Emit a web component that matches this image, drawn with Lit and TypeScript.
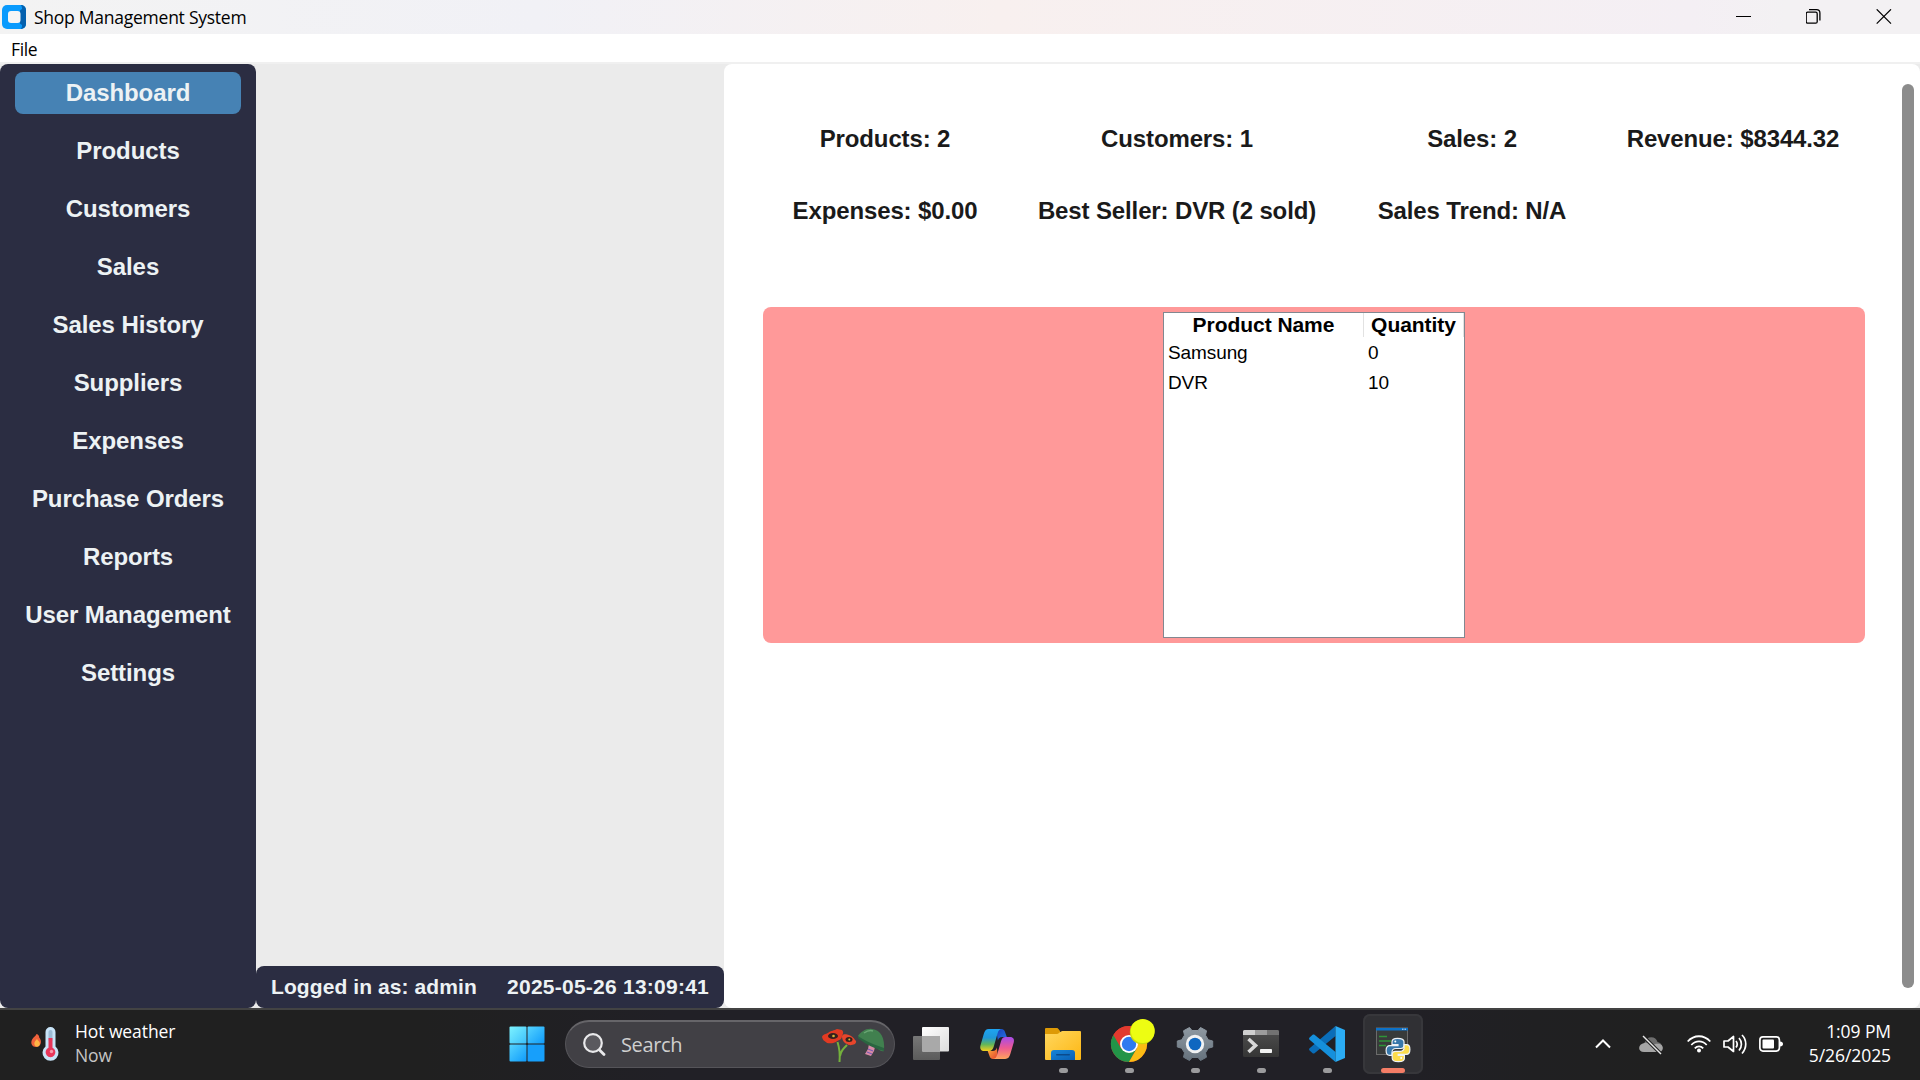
import { LitElement, html, css, svg } from "lit";
import { customElement, property } from "lit/decorators.js";
import { classMap } from "lit/directives/class-map.js";

const NAV = [
  "Dashboard", "Products", "Customers", "Sales", "Sales History", "Suppliers",
  "Expenses", "Purchase Orders", "Reports", "User Management", "Settings",
];

const STATS = [
  "Products: 2", "Customers: 1", "Sales: 2", "Revenue: $8344.32",
  "Expenses: $0.00", "Best Seller: DVR (2 sold)", "Sales Trend: N/A",
];

const STOCK = [
  { name: "Samsung", qty: 0 },
  { name: "DVR", qty: 10 },
];

// Every taskbar icon is drawn in a 36x36 box.
const ICONS: Record<string, unknown> = {
  start: svg`
    <defs><linearGradient id="st" x1="0" y1="0" x2="1" y2="1" gradientUnits="objectBoundingBox"><stop offset="0" stop-color="#7df3ff"/><stop offset="1" stop-color="#3cc0fb"/></linearGradient>
    <linearGradient id="sb" x1="0" y1="0" x2="1" y2="1"><stop offset="0" stop-color="#55d4ff"/><stop offset="1" stop-color="#0f9bfb"/></linearGradient></defs>
    <rect x=".5" y=".5" width="17" height="17" rx="1" fill="url(#st)"/>
    <rect x="18.500" y=".5" width="17" height="17" rx="1" fill="url(#sb)"/>
    <rect x=".5" y="18.500" width="17" height="17" rx="1" fill="url(#sb)"/>
    <rect x="18.500" y="18.500" width="17" height="17" rx="1" fill="#179ffb"/>`,
  taskview: svg`
    <defs><linearGradient id="tw" x1="0" y1="0" x2="1" y2="1"><stop offset="0" stop-color="#fff"/><stop offset="1" stop-color="#dcdcdc"/></linearGradient>
    <linearGradient id="tg" x1="0" y1="0" x2="0" y2="1"><stop offset="0" stop-color="#777"/><stop offset="1" stop-color="#5b5b5b"/></linearGradient></defs>
    <rect x="0" y="10" width="27" height="24" rx="1" fill="url(#tg)"/>
    <rect x="9" y="1" width="27" height="24.500" rx="1" fill="url(#tw)"/>
    <path d="M9 10H27V25.500H10a1 1 0 0 1-1-1z" fill="#a9a9a9"/>`,
  copilot: svg`
    <defs>
      <linearGradient id="c1" x1="0" y1="0" x2="0" y2="1"><stop offset="0" stop-color="#1ea4f2"/><stop offset=".4" stop-color="#1f97d8"/><stop offset=".7" stop-color="#62b65a"/><stop offset="1" stop-color="#f4cf1c"/></linearGradient>
      <linearGradient id="c2" x1="0" y1="0" x2="0" y2="1"><stop offset="0" stop-color="#a64bea"/><stop offset=".5" stop-color="#ee5a92"/><stop offset="1" stop-color="#ffa45c"/></linearGradient>
      <linearGradient id="c3" x1="0" y1="0" x2="1" y2="1"><stop offset="0" stop-color="#1b3fb4"/><stop offset="1" stop-color="#2274e8"/></linearGradient>
      <linearGradient id="c4" x1="0" y1="0" x2="1" y2="1"><stop offset="0" stop-color="#ffb23e"/><stop offset="1" stop-color="#e2402f"/></linearGradient>
    </defs>
    <path d="M17 3h5.500c2 0 3 1.400 3.500 3l1.800 5h-4.600c-2.500 0-3.700 1.500-4.300 3.500z" fill="url(#c3)"/>
    <path d="M19 33h-5c-2 0-3-1.400-3.500-3l-1.800-5h5c2.400 0 3.600-1.200 4.200-3.400z" fill="url(#c4)"/>
    <path d="M9.800 3H23c-2.600 0-3.700 2-4.400 4.200l-3.900 13.600c-.8 2.700-2 4.200-4.600 4.200H5.300C2 25 .7 22.600 1.400 19.700L4.700 8.200C5.700 4.800 7 3 9.800 3z" fill="url(#c1)"/>
    <path d="M26.200 33H14c2.400 0 3.500-2 4.100-4.200L22 15.200c.8-2.700 2-4.200 4.600-4.200h4.500c3.300 0 4.400 2.400 3.700 5.300l-3.400 11.500c-1 3.400-2.400 5.200-5.200 5.200z" fill="url(#c2)"/>`,
  files: svg`
    <defs><linearGradient id="fy" x1="0" y1="0" x2="1" y2="1"><stop offset="0" stop-color="#ffd75e"/><stop offset="1" stop-color="#fdb714"/></linearGradient>
    <linearGradient id="fb" x1="0" y1="0" x2="1" y2="1"><stop offset="0" stop-color="#1785d8"/><stop offset="1" stop-color="#0a5fb4"/></linearGradient></defs>
    <path d="M0 3a1 1 0 0 1 1-1h10.500c1 0 1.600.5 2 1L15 5v4H0z" fill="#dd9a06"/>
    <path d="M0 8h11c1.500 0 2.500-.5 3.500-1.500S16.500 5 17.500 5H35a1 1 0 0 1 1 1v27a1 1 0 0 1-1 1H1a1 1 0 0 1-1-1z" fill="url(#fy)"/>
    <path d="M6 34V27a3 3 0 0 1 3-3h18a3 3 0 0 1 3 3v7z" fill="url(#fb)"/>
    <rect x="11" y="28" width="14" height="1.600" rx=".8" fill="#0b4a8c"/>`,
  chrome: svg`
    <circle cx="18" cy="18" r="18" fill="#e23a2e"/>
    <path d="M2.400 9A18 18 0 0 0 18 36L25.800 22.500 18 26.500 10.200 22.500z" fill="#229448"/>
    <path d="M33.600 9A18 18 0 0 1 18 36L25.800 22.500C27.500 18 26 12 20 9z" fill="#fbbc14"/>
    <path d="M2.400 9A18 18 0 0 1 33.600 9H18z" fill="#e23a2e"/>
    <circle cx="18" cy="18" r="9" fill="#fff"/><circle cx="18" cy="18" r="7.200" fill="#2f7af0"/>
    <circle cx="31" cy="6" r="12.200" fill="#c9d80c"/><circle cx="31.800" cy="5" r="12" fill="#edfd12"/>`,
  settings: svg`
    <defs><linearGradient id="gg" x1="0" y1="0" x2="0" y2="1"><stop offset="0" stop-color="#8f99a2"/><stop offset="1" stop-color="#66727d"/></linearGradient></defs>
    <path d="M12.500 1.500l2.500 3h6l2.500-3 6 3.300-1 4.400 2.800 4.600L35.700 15v6l-4.400 1.200-2.800 4.600 1 4.400-6 3.300-2.500-3h-6l-2.500 3-6-3.300 1-4.400-2.800-4.600L.3 21v-6l4.400-1.200 2.800-4.600-1-4.400z" fill="url(#gg)" stroke="url(#gg)" stroke-linejoin="round"/>
    <circle cx="18" cy="18" r="9.200" fill="#f1f2f3"/><circle cx="18" cy="18" r="6.300" fill="#0f67c0"/>`,
  terminal: svg`
    <defs><linearGradient id="tm" x1="0" y1="0" x2="0" y2="1"><stop offset="0" stop-color="#4e4e4e"/><stop offset="1" stop-color="#353535"/></linearGradient></defs>
    <rect y="4" width="36" height="27" rx="1.500" fill="url(#tm)"/>
    <path d="M1.500 4H12v5H0V5.500A1.500 1.500 0 0 1 1.500 4z" fill="#cfcfcf"/>
    <path d="M12 4h12v5H12z" fill="#9c9c9c"/><path d="M24 4h10.500A1.500 1.500 0 0 1 36 5.500V9H24z" fill="#727272"/>
    <path d="M5.500 13l7 6.500-7 6.500" fill="none" stroke="#d8d8d8" stroke-width="3.600"/>
    <rect x="17" y="23" width="12" height="4" rx=".8" fill="#f2f2f2"/>`,
  vscode: svg`
    <path d="M26.500 0v10L5.500 27.200c-.6.500-1.400.4-1.900 0L.6 24.500c-.7-.6-.7-1.600 0-2.200z" fill="#0a6db8"/>
    <path d="M26.500 36V26L5.500 8.800c-.6-.5-1.400-.4-1.900 0L.6 11.500c-.7.6-.7 1.600 0 2.200z" fill="#1590dc"/>
    <path d="M26.500 0L36 4v28l-9.500 4z" fill="#2bacf4"/>`,
  python: svg`
    <rect x="1.500" y="2" width="31" height="26.500" fill="#383b3a" stroke="#6b6b6b"/>
    <rect x="1" y="2" width="32" height="2.500" fill="#0d72c8"/><path d="M27 3.200h1.500M29.500 3.200H31" stroke="#cfe6fa"/>
    <path d="M4 10.500h8M4 15h12M4 19.500h7" stroke="#2e9438" stroke-width="1.300"/>
    <g stroke="#eef2f5" stroke-width="1.200">
    <path d="M22.500 12.300c-4.300 0-5.500 1.200-5.500 3.500v2.700h6v1.200h-8c-2.500 0-3.900 1.700-3.900 4.900s1.400 4.800 3.400 4.800H17v-3c0-2.200 1.700-3.900 3.900-3.900h5.100c1.800 0 3-1.300 3-3v-3.700c0-2.200-1.800-3.500-6.500-3.500z" fill="#3878ab"/>
    <path d="M23.500 35.700c4.600 0 5.900-1.300 5.900-3.500v-2.700H23.200v-1.200h8.100c2.300 0 3.600-1.800 3.600-4.900s-1.300-4.700-3.300-4.700h-2.500v2.900c0 2.200-1.500 3.700-3.700 3.700h-5c-1.900 0-3.200 1.300-3.200 3.100v3.800c0 2.200 1.800 3.500 6.300 3.500z" fill="#fddc4b"/></g>
    <circle cx="20.300" cy="15.600" r="1" fill="#fff"/><circle cx="26.200" cy="32" r="1" fill="#fff"/>`,
};

const APPS = [
  { icon: "taskview" }, { icon: "copilot" }, { icon: "files", open: true },
  { icon: "chrome", open: true }, { icon: "settings", open: true },
  { icon: "terminal", open: true }, { icon: "vscode", open: true },
  { icon: "python", active: true },
] as { icon: string; open?: boolean; active?: boolean }[];

@customElement("window-frame")
class WindowFrame extends LitElement {
  static styles = css`
    :host { display: block; font-family: "Open Sans", "Noto Sans", sans-serif; color: #000; }
    .title { display: flex; align-items: center; height: 34px; padding: 0 28px 0 2px;
      background: linear-gradient(90deg, #f3f3f3 0%, #f1f1f6 28%, #f8f0ef 52%, #f4eff4 88%, #f3f1f3 93%, #f3f1f3 100%); box-sizing: border-box; }
    .logo { width: 24px; height: 24px; display: block; }
    .name { margin-left: 8px; flex: 1; font-size: 17.500px; letter-spacing: -0.250px; line-height: 34px; }
    .controls { display: flex; gap: 54px; height: 16px; }
    .controls svg { width: 16px; height: 16px; display: block; }
    .menu { height: 28px; background: #fff; border-bottom: 2px solid #f0f0f0; padding-left: 11px;
      font-size: 17.500px; letter-spacing: -0.400px; line-height: 30px; box-sizing: content-box; }
  `;
  render() {
    return html`
      <div class="title">
        <svg class="logo" viewBox="0 0 24 24">
          <rect width="24" height="24" rx="5" fill="#0a9bfd"/>
          <path d="M19 0a5 5 0 0 1 5 5v14a5 5 0 0 1-5 5l-1-2V6z" fill="#0561ae"/>
          <path d="M14 0h3a3 3 0 0 1 3 3v1l-3 2h-3zM14 24h3a3 3 0 0 0 3-3v-1l-3-2h-3z" fill="#0a9bfd"/>
          <rect x="6" y="6" width="12.500" height="12" rx="3" fill="#f5f5f5"/>
        </svg>
        <span class="name">Shop Management System</span>
        <div class="controls">
          <svg viewBox="0 0 16 16"><path d="M0 7.500h15" stroke="#000" /></svg>
          <svg viewBox="0 0 16 16" fill="none" stroke="#000" stroke-width="1.300"><rect x=".2" y="3.200" width="11" height="11" rx="1.500"/><path d="M3 .7h7.500a3.400 3.400 0 0 1 3.400 3.400V11.500"/></svg>
          <svg viewBox="0 0 16 16"><path d="M.7 .3l14.300 14.300M15 .3L.7 14.600" stroke="#000" stroke-width="1.200"/></svg>
        </div>
      </div>
      <div class="menu">File</div>`;
  }
}

@customElement("side-nav")
class SideNav extends LitElement {
  @property() active = "Dashboard";
  static styles = css`
    :host { display: block; font-family: "Liberation Sans", Arial, sans-serif; }
    .nav { height: 100%; box-sizing: border-box; padding: 8px 15px; display: flex; flex-direction: column; gap: 16px;
      background: #2b2d42; border-radius: 8px; }
    .item { height: 42px; line-height: 41px; border-radius: 8px; text-align: center; color: #edf2f4;
      font-size: 24px; font-weight: 700; letter-spacing: -0.080px; white-space: nowrap; }
    .on { background: #4682b4; }
  `;
  render() {
    return html`<nav class="nav">${NAV.map((n) => html`
      <div class=${classMap({ item: true, on: n === this.active })}>${n}</div>`)}</nav>`;
  }
}

@customElement("task-bar")
class TaskBar extends LitElement {
  static styles = css`
    :host { display: block; font-family: "Open Sans", "Noto Sans", sans-serif; color: #fff; }
    .bar { height: 72px; box-sizing: border-box; border-top: 2px solid #434343; display: flex; align-items: center;
      padding-bottom: 2px; background: linear-gradient(90deg, #202020 0%, #202020 22%, #212026 35%, #212026 72%, #202022 80%, #202020 86%); }
    svg { display: block; overflow: visible; }
    .weather { width: 478px; box-sizing: border-box; padding-left: 31px; display: flex; align-items: center; gap: 16px; }
    .weather svg { width: 28px; height: 34px; }
    .lines { font-size: 17.500px; line-height: 24px; letter-spacing: -0.080px; padding-bottom: 2px; }
    .dim { color: #c5c5c5; }
    .start { width: 87px; display: flex; justify-content: center; box-sizing: border-box; padding-right: 14px; padding-left: 25px; }
    .start svg { width: 36px; height: 36px; }
    .search { width: 330px; height: 48px; box-sizing: border-box; border-radius: 24px; display: flex; align-items: center;
      background: #414045; border: 1px solid #555459; border-top: 2px solid #666569; padding: 0 8px 0 16px; }
    .glass { width: 24px; height: 24px; }
    .hint { flex: 1; margin-left: 15px; font-size: 20px; letter-spacing: -0.350px; color: #cfcfcf; }
    .art { width: 64px; height: 36px; margin-top: 2px; }
    .apps { display: flex; margin-left: 3px; }
    .app { width: 60px; height: 60px; margin: 0 3px; box-sizing: border-box; border-radius: 7px; display: grid;
      grid-template-rows: 42px 6px; padding-top: 12px; justify-items: center; }
    .app svg { width: 36px; height: 36px; }
    .pill { width: 9px; height: 5px; border-radius: 2.500px; background: #9b9b9d; }
    .focus { background: #303034; box-shadow: inset 0 0 0 2px #37373b; }
    .focus .pill { width: 24px; background: #f47d66; }
    .hidden { visibility: hidden; }
    .tray { margin-left: auto; display: flex; align-items: center; padding-right: 29px; }
    .chev { width: 16px; height: 10px; margin-right: 28px; }
    .cloud { width: 24px; height: 24px; margin-right: 24px; }
    .sys { display: flex; gap: 12px; }
    .sys svg { width: 24px; height: 24px; }
    .clock { width: 108px; text-align: right; font-size: 17.500px; line-height: 24px; letter-spacing: -0.080px; padding-bottom: 2px; }
  `;
  render() {
    return html`<footer class="bar">
      <div class="weather">
        <svg viewBox="0 0 28 34">
          <path d="M5.500 7c-.4 2-3 3-4.400 5.500C-1 16.500 1.500 20 5 20c3.500 0 5.500-3 4.800-6.500-.3-1.300-1-2.300-1.600-3C8.400 9 7.500 7.500 5.500 7z" fill="#f0623c"/>
          <path d="M6 12c-2 2-3 3.500-2.600 5.200.3 1.500 1.300 2.500 2.600 2.500s2.900-1.200 2.900-3C8.900 14.500 7 14 6 12z" fill="#ffb545"/>
          <path d="M19.500 0a5 5 0 0 0-5 5v14.500a8 8 0 1 0 10 0V5a5 5 0 0 0-5-5z" fill="#c8e4f8"/>
          <rect x="17.500" y="3" width="4" height="12" rx="2" fill="#9bbcd6"/>
          <path d="M17.500 11h4v9.800a4.900 4.900 0 1 1-4 0z" fill="#e8365a"/><circle cx="20.500" cy="24.500" r="1.700" fill="#f998ab"/>
        </svg>
        <div class="lines"><div>Hot weather</div><div class="dim">Now</div></div>
      </div>
      <div class="start"><svg viewBox="0 0 36 36">${ICONS.start}</svg></div>
      <div class="search">
        <svg class="glass" viewBox="0 0 24 24" fill="none" stroke="#e9e9eb"><circle cx="11" cy="10" r="8.800" stroke-width="2.200" fill="#5a595e"/><path d="M17.500 17l4.500 4.500" stroke-width="2.800" stroke-linecap="round"/></svg>
        <span class="hint">Search</span>
        <svg class="art" viewBox="0 0 64 36">
          <path d="M17.500 34c.6-7 .3-13-2-20M18 28c1-5 3-7 7-11" fill="none" stroke="#74b13c" stroke-width="2"/>
          <path d="M0 9c1-3 4-3 6-4 3-3 6-2 9-4l5 1c2 2 1 4 0 6 0 4-4 4-6 6-4 2-7 1-9 1-2-2-4-2-5-6z" fill="#e23a22"/>
          <ellipse cx="11" cy="8" rx="5" ry="3" fill="#35211d"/><circle cx="11.500" cy="8" r="1.300" fill="#d8b33a"/>
          <path d="M20 8c2-3 5-1 7-1 3 1 5 3 6 5 2 1 1 3 0 4-3 1-5 2-8 0-3-1-5-4-5-8z" fill="#e8452b"/>
          <ellipse cx="27" cy="11.500" rx="3.500" ry="2.500" fill="#35211d"/><circle cx="27.300" cy="11.500" r="1" fill="#d8b33a"/>
          <path d="M47 16l6 3-1 4-3 5-6-2 3-5z" fill="#d98aa6"/><path d="M46 21l5 2M45 24l5 2" stroke="#7a5ab0" stroke-width="1.200"/>
          <path d="M36 8c3-4 8-8 14-7 9 1 13 9 12 22-2 1-5-1-7-3-6-3-12-6-18-10z" fill="#41804f"/>
          <path d="M36 8c7 5 17 9 26 12v3c-9-2-19-7-26-13z" fill="#2a6540"/>
          <path d="M42 5c3-2 6-3 9-2" stroke="#6aa674" stroke-width="1.500" fill="none"/>
        </svg>
      </div>
      <div class="apps">${APPS.map((a) => html`
        <div class=${classMap({ app: true, focus: !!a.active })}>
          <svg viewBox="0 0 36 36">${ICONS[a.icon]}</svg>
          <div class=${classMap({ pill: true, hidden: !a.open && !a.active })}></div>
        </div>`)}</div>
      <div class="tray">
        <svg class="chev" viewBox="0 0 16 10"><path d="M1 8.500l7-7 7 7" fill="none" stroke="#fff" stroke-width="2"/></svg>
        <svg class="cloud" viewBox="0 0 24 24">
          <path d="M6 10a6.500 6.500 0 0 1 12.500 0c3 .5 4.500 2.500 4.500 5H2z" fill="#6d6d6d"/>
          <path d="M5.500 11c2.500-.5 5 .5 7.500 2.500 3-2 7-2.500 9.500-.5 2.500 2 1.500 7-2.500 7H5c-6.500 0-6.500-8 .5-9z" fill="#a5a5a5"/>
          <path d="M4 4l18 18" stroke="#202020" stroke-width="3.500"/><path d="M4 4l18 18" stroke="#e8e8e8" stroke-width="1.400"/>
        </svg>
        <div class="sys">
          <svg viewBox="0 0 24 24" fill="none" stroke="#fff" stroke-width="1.800">
            <path d="M.7 9.500c6.500-7 16-7 22.600 0M4.300 13c4.500-4.800 11-4.800 15.400 0M7.800 16.300c2.500-2.700 6-2.700 8.400 0"/><circle cx="12" cy="18.500" r="2" fill="#fff" stroke="none"/></svg>
          <svg viewBox="0 0 24 24" fill="none" stroke="#fff" stroke-width="1.700">
            <path d="M1 9h4l5.500-4.500v15L5 15H1z" stroke-linejoin="round"/><path d="M13 9c1.500 2 1.500 4.500 0 6.500M16 6c3.200 3.500 3.200 9 0 12.500M19 3c5 5 5 13 0 18.500"/></svg>
          <svg viewBox="0 0 24 24"><rect x=".9" y="4.900" width="19.500" height="14.200" rx="3" fill="none" stroke="#fff" stroke-width="1.700"/>
            <rect x="3.500" y="7.500" width="11.500" height="9" rx="1" fill="#fff"/><path d="M21 9.500c2 0 3 1 3 2.500s-1 2.500-3 2.500z" fill="#fff"/></svg>
        </div>
        <div class="clock"><div>1:09 PM</div><div>5/26/2025</div></div>
      </div>
    </footer>`;
  }
}

@customElement("app-root")
class AppRoot extends LitElement {
  static styles = css`
    :host { display: block; width: 1920px; height: 1080px; overflow: hidden; font-family: "Liberation Sans", Arial, sans-serif; }
    .page { height: 1080px; display: grid; grid-template-rows: 64px 944px 72px; background: #ebebeb; }
    .body { display: grid; grid-template-columns: 256px 468px 1196px; }
    .mid { display: flex; flex-direction: column; justify-content: flex-end; }
    .status { height: 42px; box-sizing: border-box; padding: 0 15px; display: flex; justify-content: space-between;
      background: #2b2d42; border-radius: 8px; color: #edf2f4; font-size: 21px; font-weight: 700; letter-spacing: 0.090px; line-height: 41px; white-space: nowrap; }
    .time { letter-spacing: 0.240px; }
    .content { background: #fff; border-radius: 8px; display: flex; justify-content: space-between; padding: 20px 6px 20px 39px; box-sizing: border-box; }
    .main { width: 1102px; }
    .stats { display: grid; grid-template-columns: 184px 280px 190px 212px; column-gap: 60px; grid-auto-rows: 72px; padding: 19px 0 0 30px; }
    .stat { display: flex; justify-content: center; align-items: center; height: 72px; font-size: 24px; font-weight: 700; letter-spacing: -0.130px; color: #1a1a1a; white-space: nowrap; }
    .low { margin-top: 60px; height: 336px; box-sizing: border-box; padding: 5px 0; display: flex; justify-content: center; background: #ff9999; border-radius: 8px; }
    .table { width: 302px; height: 326px; box-sizing: border-box; border: 1px solid #828790; background: #fff; color: #000; }
    .row { display: grid; grid-template-columns: 200px 100px; height: 30px; line-height: 30px; font-size: 19px; letter-spacing: -0.100px; }
    .row span { padding-left: 4px; }
    .head { height: 24px; line-height: 23px; font-size: 21px; font-weight: 700; text-align: center; margin-bottom: 1px; letter-spacing: -0.050px; }
    .head span { padding: 0; border-right: 1px solid #e2e2e2; }
    .scroll { width: 12px; background: #8c8c8c; border-radius: 6px; }
  `;
  render() {
    return html`<div class="page">
      <window-frame></window-frame>
      <div class="body">
        <side-nav></side-nav>
        <div class="mid"><div class="status"><span>Logged in as: admin</span><span class="time">2025-05-26 13:09:41</span></div></div>
        <div class="content">
          <div class="main">
            <div class="stats">${STATS.map((s) => html`<div class="stat">${s}</div>`)}</div>
            <div class="low"><div class="table">
              <div class="row head"><span>Product Name</span><span>Quantity</span></div>
              ${STOCK.map((r) => html`<div class="row"><span>${r.name}</span><span>${r.qty}</span></div>`)}
            </div></div>
          </div>
          <div class="scroll"></div>
        </div>
      </div>
      <task-bar></task-bar>
    </div>`;
  }
}
